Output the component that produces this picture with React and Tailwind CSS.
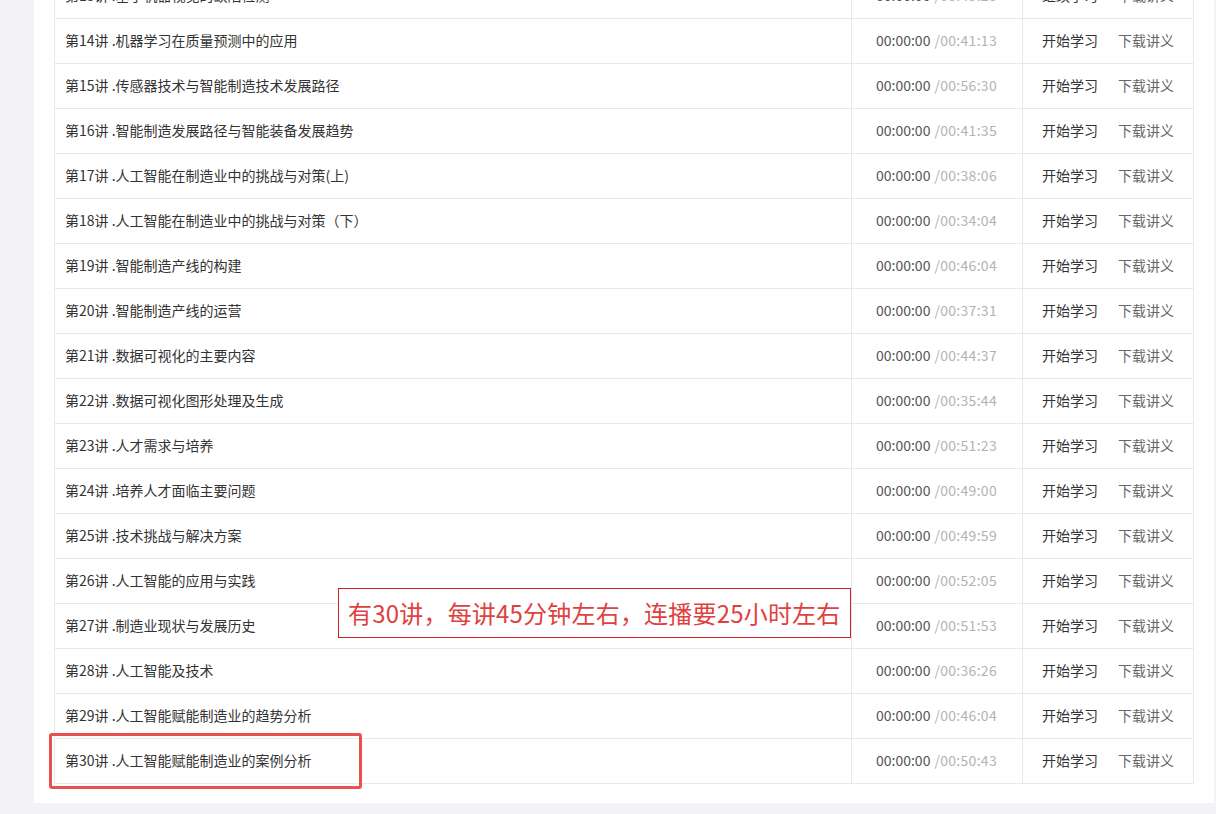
import React from 'react';

const lessons = [
  ['第13讲 .基于机器视觉的缺陷检测', '00:43:23', '继续学习'],
  ['第14讲 .机器学习在质量预测中的应用', '00:41:13'],
  ['第15讲 .传感器技术与智能制造技术发展路径', '00:56:30'],
  ['第16讲 .智能制造发展路径与智能装备发展趋势', '00:41:35'],
  ['第17讲 .人工智能在制造业中的挑战与对策(上)', '00:38:06'],
  ['第18讲 .人工智能在制造业中的挑战与对策（下）', '00:34:04'],
  ['第19讲 .智能制造产线的构建', '00:46:04'],
  ['第20讲 .智能制造产线的运营', '00:37:31'],
  ['第21讲 .数据可视化的主要内容', '00:44:37'],
  ['第22讲 .数据可视化图形处理及生成', '00:35:44'],
  ['第23讲 .人才需求与培养', '00:51:23'],
  ['第24讲 .培养人才面临主要问题', '00:49:00'],
  ['第25讲 .技术挑战与解决方案', '00:49:59'],
  ['第26讲 .人工智能的应用与实践', '00:52:05'],
  ['第27讲 .制造业现状与发展历史', '00:51:53'],
  ['第28讲 .人工智能及技术', '00:36:26'],
  ['第29讲 .人工智能赋能制造业的趋势分析', '00:46:04'],
  ['第30讲 .人工智能赋能制造业的案例分析', '00:50:43'],
];

function LessonRow({ title, total, action }) {
  return (
    <div className="grid grid-cols-[797px_171px_171px] h-[45px] border-b border-[#e8e8e8] text-[14px]">
      <div className="flex items-center pl-[10px] pb-[2px] text-[#333] border-r border-[#e8e8e8] whitespace-nowrap">
        {title}
      </div>
      <div className="flex items-center pl-[24px] pb-[2px] border-r border-[#e8e8e8] whitespace-nowrap">
        <span className="text-[#555]">00:00:00</span>
        <span className="text-[#b3b3b3] ml-[4px] tracking-[0.3px]">/{total}</span>
      </div>
      <div className="flex items-center pl-[19px] pb-[2px] gap-[20px] whitespace-nowrap">
        <span className="text-[#333]">{action || '开始学习'}</span>
        <span className="text-[#666]">下载讲义</span>
      </div>
    </div>
  );
}

export default function App() {
  return (
    <div
      className="relative h-[814px] w-[1216px] overflow-hidden bg-[#f3f3f7]"
      style={{ fontFamily: '"Noto Sans CJK SC", "Noto Sans", sans-serif' }}
    >
      <div className="ml-[34px] w-[1180px] bg-white px-[20px] pb-[19px]">
        <div className="-mt-[26px] border-l border-r border-[#e8e8e8]">
          {lessons.map(([title, total, action]) => (
            <LessonRow key={title} title={title} total={total} action={action} />
          ))}
        </div>
      </div>

      {/* annotation note */}
      <div className="absolute left-[338px] top-[588px] w-[513px] h-[50px] border border-[#cc2222] bg-white flex items-center pl-[9px]">
        <span className="text-[24px] text-[#e0413f] whitespace-nowrap tracking-[0.2px]">
          有30讲，每讲45分钟左右，连播要25小时左右
        </span>
      </div>

      {/* highlight on last lesson */}
      <div className="absolute left-[49px] top-[733px] w-[313px] h-[56px] border-[3px] border-[#e8504f] rounded-[3px]" />
    </div>
  );
}
